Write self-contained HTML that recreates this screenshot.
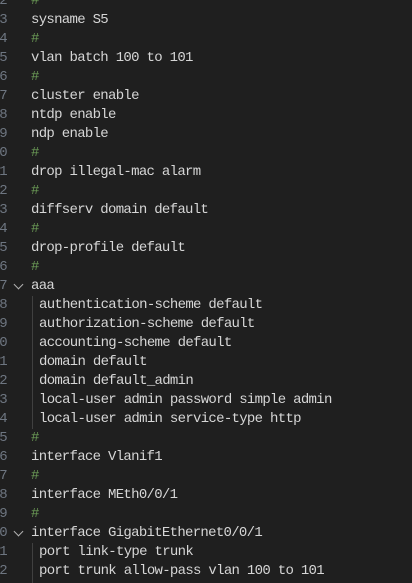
<!DOCTYPE html>
<html><head><meta charset="utf-8"><style>
html,body{margin:0;padding:0;background:#1f1f1f;width:412px;height:576px;overflow:hidden}
.l{position:absolute;left:0;height:19px;line-height:19px;font-family:"Liberation Mono",monospace;font-size:14px;letter-spacing:-0.7px;color:#d6d6d6;white-space:pre}
.n{position:absolute;right:0;width:30px;text-align:right;color:#6e7681;left:-23px}
.t{position:absolute;left:31px}
.i{left:39px}
.c{color:#6a9955}
.g{position:absolute;left:32px;width:1px;background:#404040}
.ch{position:absolute;left:15px;top:4px;width:6px;height:6px;border-right:1.3px solid #b0b0b0;border-bottom:1.3px solid #b0b0b0;transform:rotate(45deg)}
</style></head><body>
<div class="g" style="top:296px;height:133px"></div>
<div class="g" style="top:543px;height:40px"></div>
<div id="c"></div>
<script>
var L=[["#",0],["sysname S5",0],["#",0],["vlan batch 100 to 101",0],["#",0],["cluster enable",0],["ntdp enable",0],["ndp enable",0],["#",0],["drop illegal-mac alarm",0],["#",0],["diffserv domain default",0],["#",0],["drop-profile default",0],["#",0],["aaa",2],["authentication-scheme default",1],["authorization-scheme default",1],["accounting-scheme default",1],["domain default",1],["domain default_admin",1],["local-user admin password simple admin",1],["local-user admin service-type http",1],["#",0],["interface Vlanif1",0],["#",0],["interface MEth0/0/1",0],["#",0],["interface GigabitEthernet0/0/1",2],["port link-type trunk",1],["port trunk allow-pass vlan 100 to 101",1]];
var h="";
L.forEach(function(x,k){var top=-8+19*k;
h+='<div class="l" style="top:'+top+'px;width:412px"><span class="n">'+(k+2)+'</span>'+(x[1]==2?'<span class="ch"></span>':'')+'<span class="t'+(x[1]==1?' i':'')+(x[0]=="#"?' c':'')+'">'+x[0]+'</span></div>';});
document.getElementById("c").innerHTML=h;
</script>
</body></html>
